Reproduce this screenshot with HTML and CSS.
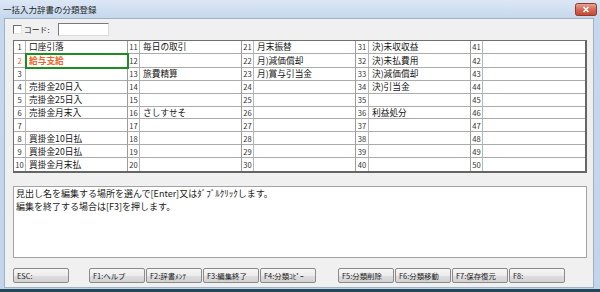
FILE: index.html
```html
<!doctype html>
<html>
<head>
    <meta charset="utf-8">
    <title>一括入力辞書の分類登録</title>
    <link rel="stylesheet" href="styles.css">
</head>

<body>
<div class="window">
    <div class="titlebar">
        <span class="title">一括入力辞書の分類登録</span>
        <span class="close">
            <svg width="22" height="13" viewBox="0 0 22 13">
                <defs>
                    <linearGradient id="cg" x1="0" y1="0" x2="0" y2="1">
                        <stop offset="0" stop-color="#eaa698"/>
                        <stop offset="0.5" stop-color="#d46a57"/>
                        <stop offset="1" stop-color="#c14631"/>
                    </linearGradient>
                </defs>
                <rect x="0.5" y="0.5" width="21" height="12" rx="2" fill="url(#cg)" stroke="#8a3a2e"/>
                <path d="M8.5 4 L13.5 9 M13.5 4 L8.5 9" stroke="#fff" stroke-width="1.6"/>
            </svg>
        </span>
    </div>

    <div class="client">
        <div class="coderow">
            <span class="check"></span>
            <span class="codelabel">コード:</span>
            <span class="codebox"></span>
        </div>

        <div class="grid">
            <div class="n">1</div><div class="t">口座引落</div>
            <div class="n">11</div><div class="t">毎日の取引</div>
            <div class="n">21</div><div class="t">月末振替</div>
            <div class="n">31</div><div class="t">決)未収収益</div>
            <div class="n">41</div><div class="t"></div>

            <div class="n hot">2</div><div class="t hot sel">給与支給</div>
            <div class="n">12</div><div class="t"></div>
            <div class="n">22</div><div class="t">月)減価償却</div>
            <div class="n">32</div><div class="t">決)未払費用</div>
            <div class="n">42</div><div class="t"></div>

            <div class="n">3</div><div class="t"></div>
            <div class="n">13</div><div class="t">旅費精算</div>
            <div class="n">23</div><div class="t">月)賞与引当金</div>
            <div class="n">33</div><div class="t">決)減価償却</div>
            <div class="n">43</div><div class="t"></div>

            <div class="n">4</div><div class="t">売掛金20日入</div>
            <div class="n">14</div><div class="t"></div>
            <div class="n">24</div><div class="t"></div>
            <div class="n">34</div><div class="t">決)引当金</div>
            <div class="n">44</div><div class="t"></div>

            <div class="n">5</div><div class="t">売掛金25日入</div>
            <div class="n">15</div><div class="t"></div>
            <div class="n">25</div><div class="t"></div>
            <div class="n">35</div><div class="t"></div>
            <div class="n">45</div><div class="t"></div>

            <div class="n">6</div><div class="t">売掛金月末入</div>
            <div class="n">16</div><div class="t">さしすせそ</div>
            <div class="n">26</div><div class="t"></div>
            <div class="n">36</div><div class="t">利益処分</div>
            <div class="n">46</div><div class="t"></div>

            <div class="n">7</div><div class="t"></div>
            <div class="n">17</div><div class="t"></div>
            <div class="n">27</div><div class="t"></div>
            <div class="n">37</div><div class="t"></div>
            <div class="n">47</div><div class="t"></div>

            <div class="n">8</div><div class="t">買掛金10日払</div>
            <div class="n">18</div><div class="t"></div>
            <div class="n">28</div><div class="t"></div>
            <div class="n">38</div><div class="t"></div>
            <div class="n">48</div><div class="t"></div>

            <div class="n">9</div><div class="t">買掛金20日払</div>
            <div class="n">19</div><div class="t"></div>
            <div class="n">29</div><div class="t"></div>
            <div class="n">39</div><div class="t"></div>
            <div class="n">49</div><div class="t"></div>

            <div class="n">10</div><div class="t">買掛金月末払</div>
            <div class="n">20</div><div class="t"></div>
            <div class="n">30</div><div class="t"></div>
            <div class="n">40</div><div class="t"></div>
            <div class="n">50</div><div class="t"></div>
        </div>

        <div class="memo">
            <div>見出し名を編集する場所を選んで[Enter]又はﾀﾞﾌﾞﾙｸﾘｯｸします。</div>
            <div>編集を終了する場合は[F3]を押します。</div>
        </div>

        <div class="fkeys">
            <span class="fkey">ESC:</span>
            <div class="fgroup">
                <span class="fkey">F1:ヘルプ</span>
                <span class="fkey">F2:辞書ﾒﾝﾃ</span>
                <span class="fkey">F3:編集終了</span>
                <span class="fkey">F4:分類ｺﾋﾟｰ</span>
            </div>
            <div class="fgroup">
                <span class="fkey">F5:分類削除</span>
                <span class="fkey">F6:分類移動</span>
                <span class="fkey">F7:保存復元</span>
                <span class="fkey">F8:</span>
            </div>
        </div>
    </div>
</div>
</body>
</html>
```

FILE: styles.css
```css
* {
  box-sizing: border-box;
}

html, body {
  margin: 0;
}

body {
  font-family: "Noto Sans CJK JP", sans-serif;
  background: #c4d6ec;
  color: #1a1a1a;
}

/* window frame (win7 basic look) */
.window {
  width: 600px;
  height: 292px;
  display: flex;
  flex-direction: column;
  padding: 0 6px 1px 4px;
  background: linear-gradient(#dce7f4, #c6d8ed 18px, #c2d5eb);
  border-bottom: 3px solid #24485a;
}

.titlebar {
  height: 18px;
  display: flex;
  align-items: center;
  justify-content: space-between;
  margin-left: -1px;
  margin-right: -3px;
}

.title {
  font-size: 8.5px;
  color: #1e1e1e;
}

.close {
  display: flex;
  margin-top: 1px;
}

.client {
  flex: 1;
  display: flex;
  flex-direction: column;
  background: #f0f0f0;
  border: 1px solid #9fb1c6;
  padding: 4px 6px 4px 8px;
}

/* code input row */
.coderow {
  height: 12px;
  display: flex;
  align-items: center;
  margin-bottom: 5px;
}

.check {
  width: 9px;
  height: 9px;
  margin-top: 1px;
  background: #fff;
  border-top: 1px solid #6e6e6e;
  border-left: 1px solid #6e6e6e;
  border-right: 1px solid #e4e4e4;
  border-bottom: 1px solid #e4e4e4;
}

.codelabel {
  font-size: 7.8px;
  margin-left: 2px;
  width: 34px;
  color: #222;
}

.codebox {
  width: 51px;
  height: 13px;
  background: #fff;
  border-top: 1px solid #7a7a7a;
  border-left: 1px solid #7a7a7a;
  border-right: 1px solid #dcdcdc;
  border-bottom: 1px solid #dcdcdc;
}

/* dictionary grid */
.grid {
  height: 133px;
  display: grid;
  grid-template-columns: 12px 1fr 12px 1fr 12px 1fr 13px 1fr 12px 1fr;
  grid-template-rows: repeat(10, 1fr);
  background: #fff;
  border-top: 1px solid #707070;
  border-left: 1px solid #707070;
  border-right: 2px solid #656565;
  border-bottom: 2px solid #656565;
  margin-bottom: 13px;
}

.grid > div {
  border-right: 1px solid #ababab;
  border-bottom: 1px solid #ababab;
  display: flex;
  align-items: center;
  white-space: nowrap;
  overflow: hidden;
}

.grid > div:nth-child(10n) {
  border-right: none;
}

.grid > div:nth-last-child(-n+10) {
  border-bottom: none;
}

.grid .n {
  justify-content: center;
  font-size: 7.6px;
  color: #333;
  border-right-color: #b8b8b8;
}

.grid .t {
  font-size: 8.7px;
  padding-left: 3px;
  color: #151515;
  border-right-color: #9c9c9c;
}

.grid .hot {
  color: #f0642a;
}

.grid .t.hot {
  font-weight: bold;
}

/* focused cell frame sits over the neighbouring lines */
.grid .sel {
  position: relative;
  z-index: 1;
  overflow: visible;
  outline: 2px solid #1d8c22;
  outline-offset: -1px;
}

/* message box */
.memo {
  height: 72px;
  background: #fff;
  border: 1px solid #a3a3a3;
  padding: 0 2px;
  font-size: 9px;
  line-height: 13px;
  color: #1a1a1a;
  margin-bottom: 10px;
}

/* function keys */
.fkeys {
  height: 15px;
  display: flex;
}

.fgroup {
  display: flex;
  gap: 1px;
}

.fgroup:nth-child(2) {
  margin-left: 20px;
}

.fgroup:nth-child(3) {
  margin-left: 22px;
}

.fkey {
  width: 56px;
  height: 15px;
  display: flex;
  align-items: center;
  padding-left: 3px;
  font-size: 7.4px;
  color: #222;
  white-space: nowrap;
  border: 1px solid #8a8a8a;
  border-radius: 2px;
  background: linear-gradient(#f6f6f6, #ececec 50%, #dedede 51%, #d2d2d2);
}
```
